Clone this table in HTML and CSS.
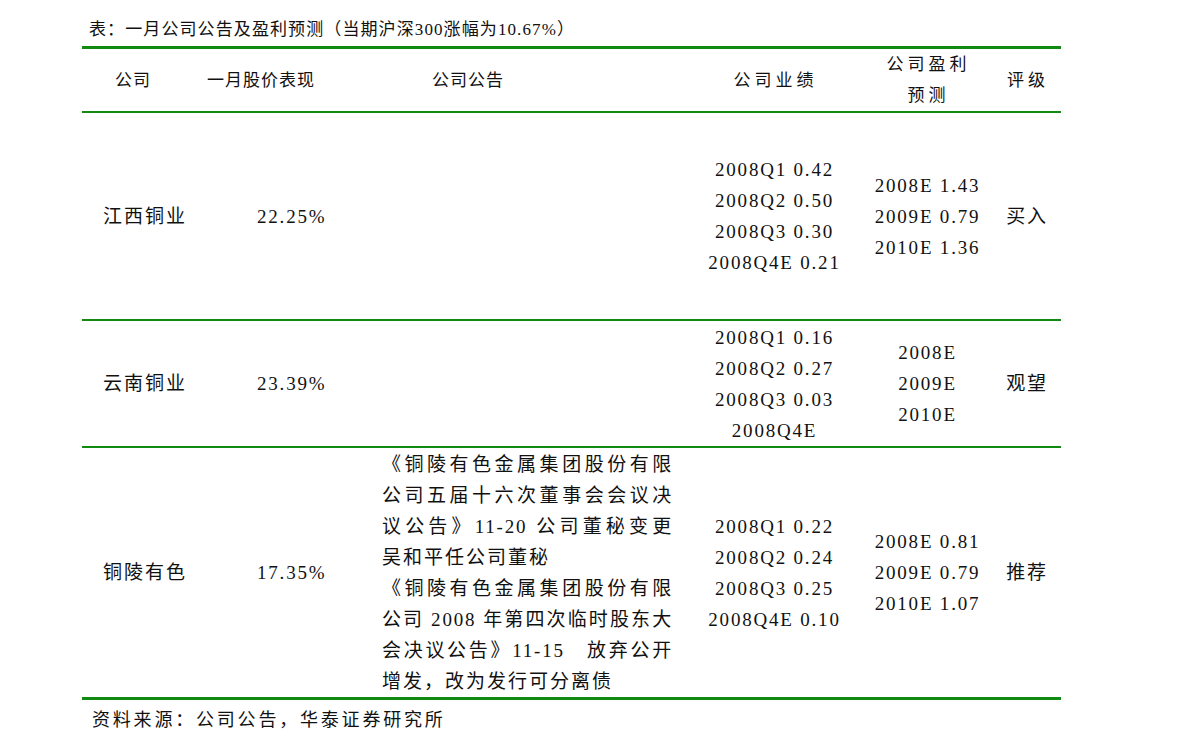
FILE: index.html
```html
<!DOCTYPE html>
<html lang="zh-CN">
<head>
<meta charset="utf-8">
<title>一月公司公告及盈利预测</title>
<link rel="stylesheet" href="styles.css">
</head>
<body>
<div class="page">
  <p class="title">表：一月公司公告及盈利预测（当期沪深300涨幅为10.67%）</p>
  <div class="tbl">
    <div class="row head">
      <div class="c1h">公司</div>
      <div class="c2h">一月股价表现</div>
      <div class="c3h">公司公告</div>
      <div class="ch">公司业绩</div>
      <div class="ch">公司盈利<br>预测</div>
      <div class="ch">评级</div>
    </div>
    <div class="row r1">
      <div class="c1">江西铜业</div>
      <div class="c2">22.25%</div>
      <div class="c3"></div>
      <div class="cc">2008Q1 0.42<br>2008Q2 0.50<br>2008Q3 0.30<br>2008Q4E 0.21</div>
      <div class="cc">2008E 1.43<br>2009E 0.79<br>2010E 1.36</div>
      <div class="cc">买入</div>
    </div>
    <div class="row r2">
      <div class="c1">云南铜业</div>
      <div class="c2">23.39%</div>
      <div class="c3"></div>
      <div class="cc">2008Q1 0.16<br>2008Q2 0.27<br>2008Q3 0.03<br>2008Q4E</div>
      <div class="cc">2008E<br>2009E<br>2010E</div>
      <div class="cc">观望</div>
    </div>
    <div class="row r3">
      <div class="c1">铜陵有色</div>
      <div class="c2">17.35%</div>
      <div class="c3">
        <div class="notes">
          <div class="j">《铜陵有色金属集团股份有限</div>
          <div class="j">公司五届十六次董事会会议决</div>
          <div class="j">议公告》11-20 公司董秘变更</div>
          <div class="l">吴和平任公司董秘</div>
          <div class="j">《铜陵有色金属集团股份有限</div>
          <div class="j">公司 2008 年第四次临时股东大</div>
          <div class="j">会决议公告》11-15&nbsp;&nbsp; 放弃公开</div>
          <div class="l">增发，改为发行可分离债</div>
        </div>
      </div>
      <div class="cc">2008Q1 0.22<br>2008Q2 0.24<br>2008Q3 0.25<br>2008Q4E 0.10</div>
      <div class="cc">2008E 0.81<br>2009E 0.79<br>2010E 1.07</div>
      <div class="cc">推荐</div>
    </div>
  </div>
  <p class="source">资料来源：公司公告，华泰证券研究所</p>
</div>
</body>
</html>
```

FILE: styles.css
```css
html, body {
  margin: 0;
  padding: 0;
  background: #ffffff;
}

body {
  font-family: "Liberation Serif", "Noto Sans CJK SC", serif;
  color: #111111;
  width: 1191px;
  height: 752px;
  overflow: hidden;
}

.page {
  display: flex;
  flex-direction: column;
}

.title {
  margin: 0;
  padding: 20px 0 6px 89px;
  font-size: 17px;
  line-height: 20px;
  letter-spacing: 1.1px;
}

.tbl {
  margin-left: 82px;
  width: 979px;
  border-top: 3px solid #118a11;
  border-bottom: 3px solid #118a11;
}

.row {
  display: grid;
  grid-template-columns: 108px 140px 355px 177px 129px 70px;
  align-items: center;
  border-bottom: 2px solid #118a11;
}

.row.r3 {
  border-bottom: none;
}

.head {
  height: 62px;
  font-size: 17px;
  line-height: 31px;
}

.r1 { height: 206px; }
.r2 { height: 125px; }
.r3 { height: 249px; }

.r1, .r2, .r3 {
  font-size: 19px;
  line-height: 31px;
  letter-spacing: 1.8px;
}

.c1h { padding-left: 33px; letter-spacing: 1px; }
.c2h { padding-left: 17px; letter-spacing: 1px; }
.c3h { padding-left: 102px; letter-spacing: 1px; }

.ch {
  text-align: center;
  letter-spacing: 4px;
  padding-left: 4px;
}

.c1 { padding-left: 21px; letter-spacing: 2px; }
.c2 { padding-left: 67px; }

.cc {
  text-align: center;
  padding-left: 2px;
}

.notes {
  margin-left: 52px;
  width: 291px;
}

.notes .j {
  text-align: justify;
  text-align-last: justify;
}

.notes .l {
  text-align: left;
  letter-spacing: 2px;
}

.source {
  margin: 10px 0 0 92px;
  font-size: 18px;
  line-height: 20px;
  letter-spacing: 2.8px;
}
```
